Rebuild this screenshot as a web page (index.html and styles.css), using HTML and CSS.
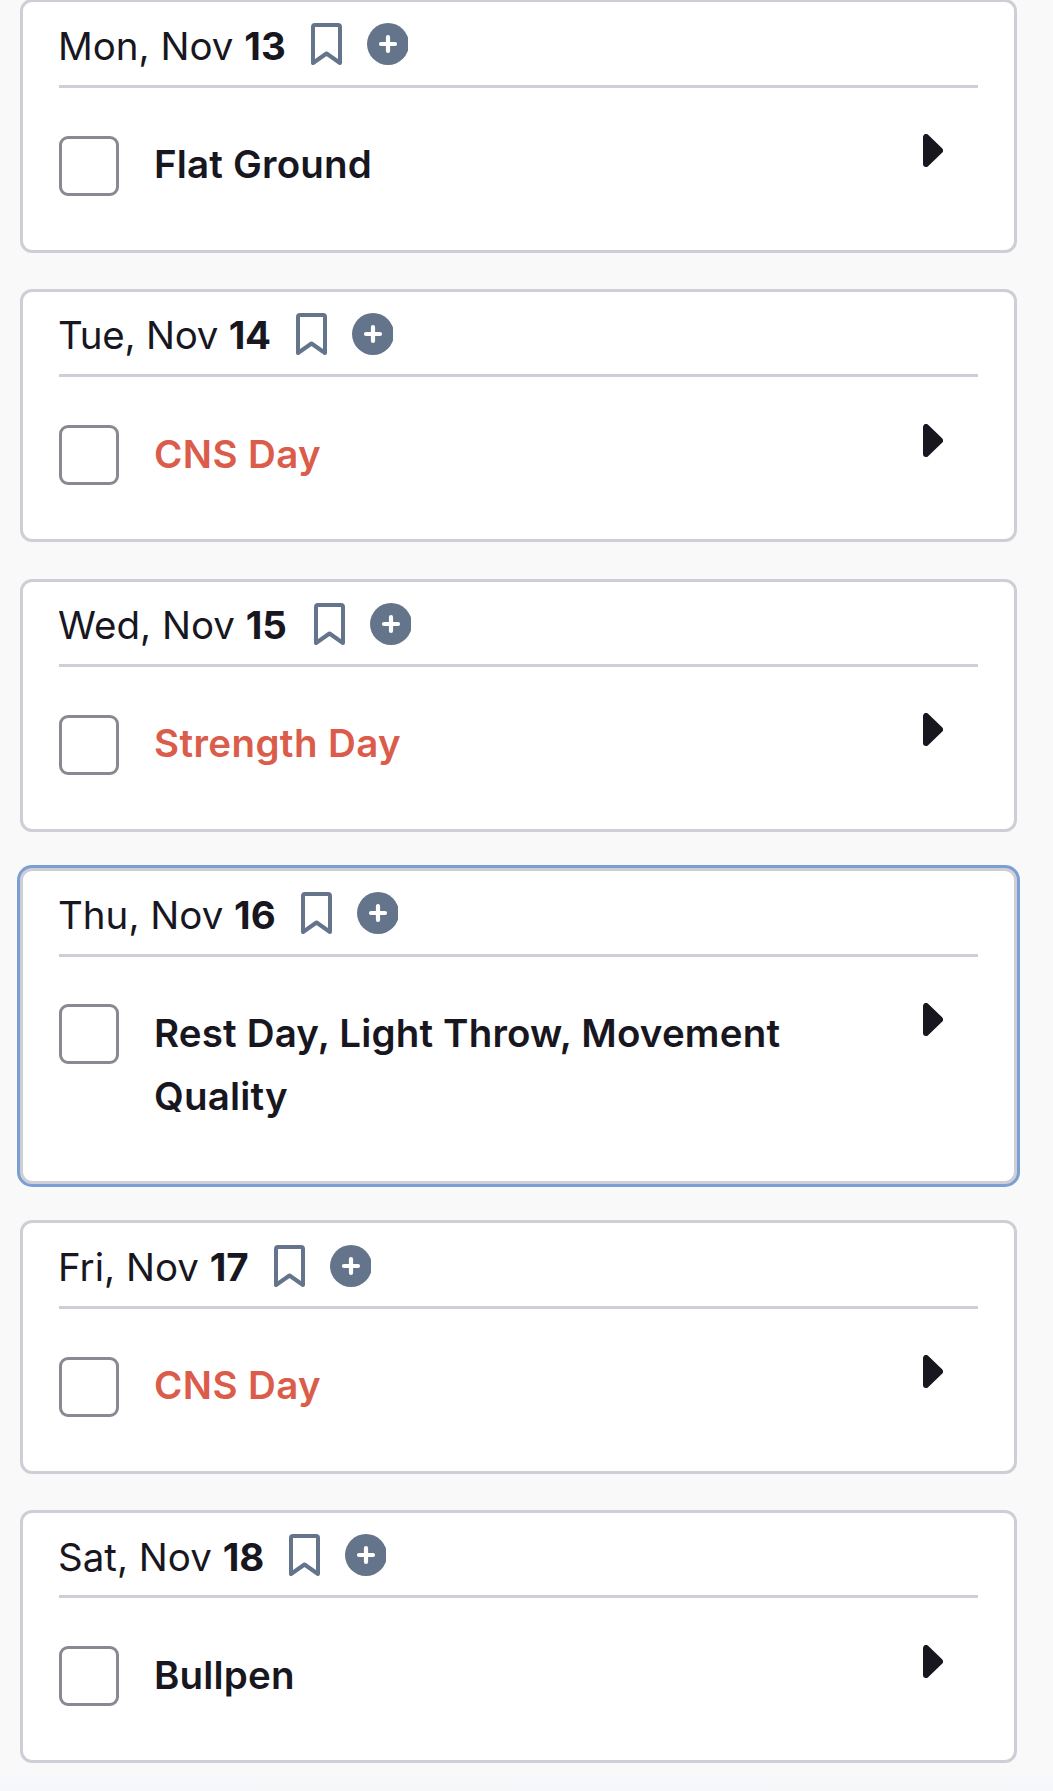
FILE: index.html
```
<!DOCTYPE html>
<html lang="en">
<head>
    <meta charset="UTF-8">
    <meta name="viewport" content="width=device-width, initial-scale=1.0">
    <title>Schedule</title>
    <link rel="stylesheet" href="styles.css">
</head>
<body>

    <!-- Shared icons -->
    <svg class="sprite" width="0" height="0">
        <symbol id="bookmark" viewBox="0 0 31 42">
            <path d="M2 4a2 2 0 0 1 2-2h23a2 2 0 0 1 2 2v36L15.500 30.500 2 40z" fill="none" stroke="currentColor" stroke-width="4" stroke-linejoin="round"/>
        </symbol>
        <symbol id="plus" viewBox="0 0 41 42">
            <circle cx="21" cy="21" r="21" fill="currentColor"/>
            <path d="M21 14v14M14 21h14" stroke="#fff" stroke-width="4.200" stroke-linecap="round"/>
        </symbol>
        <symbol id="arrow" viewBox="0 0 20 33">
            <path d="M3 3v27L17 16.500z" fill="currentColor" stroke="currentColor" stroke-width="6" stroke-linejoin="round"/>
        </symbol>
    </svg>

    <div class="schedule">
        <div class="day">
            <div class="day-header">
                <div class="date">Mon, Nov <b>13</b></div>
                <svg class="bookmark"><use href="#bookmark"/></svg>
                <svg class="plus"><use href="#plus"/></svg>
            </div>
            <div class="workout">
                <span class="checkbox"></span>
                <div class="title">Flat Ground</div>
                <svg class="arrow"><use href="#arrow"/></svg>
            </div>
        </div>

        <div class="day">
            <div class="day-header">
                <div class="date tue">Tue, Nov <b>14</b></div>
                <svg class="bookmark"><use href="#bookmark"/></svg>
                <svg class="plus"><use href="#plus"/></svg>
            </div>
            <div class="workout">
                <span class="checkbox"></span>
                <div class="title missed">CNS Day</div>
                <svg class="arrow"><use href="#arrow"/></svg>
            </div>
        </div>

        <div class="day">
            <div class="day-header">
                <div class="date wed">Wed, Nov <b>15</b></div>
                <svg class="bookmark"><use href="#bookmark"/></svg>
                <svg class="plus"><use href="#plus"/></svg>
            </div>
            <div class="workout">
                <span class="checkbox"></span>
                <div class="title missed">Strength Day</div>
                <svg class="arrow"><use href="#arrow"/></svg>
            </div>
        </div>

        <div class="day today">
            <div class="day-header">
                <div class="date">Thu, Nov <b>16</b></div>
                <svg class="bookmark"><use href="#bookmark"/></svg>
                <svg class="plus"><use href="#plus"/></svg>
            </div>
            <div class="workout">
                <span class="checkbox"></span>
                <div class="title">Rest Day, Light Throw, Movement Quality</div>
                <svg class="arrow"><use href="#arrow"/></svg>
            </div>
        </div>

        <div class="day">
            <div class="day-header">
                <div class="date">Fri, Nov <b>17</b></div>
                <svg class="bookmark"><use href="#bookmark"/></svg>
                <svg class="plus"><use href="#plus"/></svg>
            </div>
            <div class="workout">
                <span class="checkbox"></span>
                <div class="title missed">CNS Day</div>
                <svg class="arrow"><use href="#arrow"/></svg>
            </div>
        </div>

        <div class="day">
            <div class="day-header">
                <div class="date">Sat, Nov <b>18</b></div>
                <svg class="bookmark"><use href="#bookmark"/></svg>
                <svg class="plus"><use href="#plus"/></svg>
            </div>
            <div class="workout">
                <span class="checkbox"></span>
                <div class="title">Bullpen</div>
                <svg class="arrow"><use href="#arrow"/></svg>
            </div>
        </div>
    </div>

</body>
</html>
```
FILE: styles.css
```
* {
    box-sizing: border-box;
}

body {
    margin: 0;
    height: 100vh;
    background: #f9f9f9 linear-gradient(to bottom, #f9f9f9 1764px, #f5f7fa 1791px) no-repeat;
    font-family: Inter, "Noto Sans", sans-serif;
    font-size: 38.5px;
    color: #18171f;
    overflow: hidden;
}

svg {
    display: block;
    flex: none;
}

.sprite {
    position: absolute;
}

.schedule {
    display: flex;
    flex-direction: column;
    gap: 36.25px;
    margin: -0.75px 36px 0 20px;
}

.day {
    background: #fff;
    border: 3px solid #cfced7;
    border-radius: 12px;
    padding: 0 36px;
}

.day.today {
    box-shadow: 0 0 0 3px #7c9fd3;
}

.day-header {
    display: flex;
    align-items: flex-start;
    padding: 20.6px 0 15.8px;
    border-bottom: 3px solid #cfced7;
    color: #64748a;
}

.date {
    margin: 0 25px 0 -1px;
    line-height: 46px;
    white-space: nowrap;
    color: #18171f;
}

.date.tue {
    letter-spacing: -0.25px;
}

.date.wed {
    margin-right: 27px;
}

.date b {
    font-weight: 700;
}

.bookmark {
    width: 31px;
    height: 42px;
    margin: 0.6px 25px 0 0;
}

.plus {
    width: 41px;
    height: 42px;
    margin-top: 0.6px;
}

.workout {
    display: flex;
    align-items: flex-start;
    padding: 45.4px 35px 54px 0;
}

.checkbox {
    flex: none;
    width: 60px;
    height: 60px;
    margin-top: 2.55px;
    border: 3px solid #898893;
    border-radius: 9px;
}

.title {
    width: 640px;
    margin-left: 35px;
    font-weight: 600;
    line-height: 62.6px;
    letter-spacing: 0.18px;
}

.title.missed {
    letter-spacing: 0.4px;
    color: #db5c4a;
}

.arrow {
    width: 20px;
    height: 33px;
    margin: 1.2px 0 0 auto;
}
```
